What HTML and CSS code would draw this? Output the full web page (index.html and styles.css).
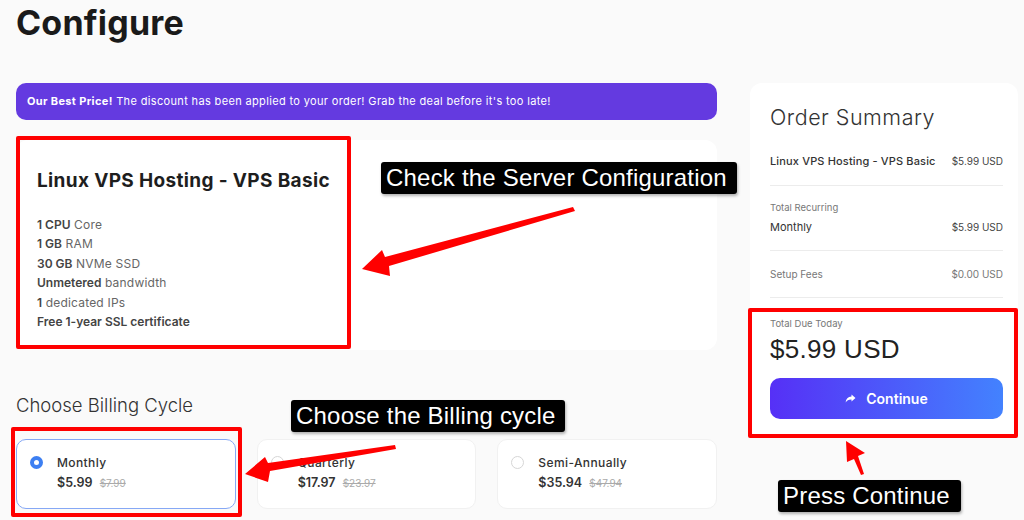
FILE: index.html
```html
<!DOCTYPE html>
<html>
    <head>
        <meta name="viewport" content="width=device-width, initial-scale=1.0">
        <title>Configure</title>
        <link rel="stylesheet" href="styles.css">
    </head>
    <body>
        <div class="header">
            <h1>Configure</h1>
        </div>
        <div class="page">
            <div class="main">
                <div class="banner"><b>Our Best Price!</b> The discount has been applied to your order! Grab the deal before it's too late!</div>

                <div class="product">
                    <h2>Linux VPS Hosting - VPS Basic</h2>
                    <ul class="features">
                        <li><b>1 CPU</b> Core</li>
                        <li><b>1 GB</b> RAM</li>
                        <li><b>30 GB</b> NVMe SSD</li>
                        <li><b>Unmetered</b> bandwidth</li>
                        <li><b>1</b> dedicated IPs</li>
                        <li><b>Free 1-year SSL certificate</b></li>
                    </ul>
                </div>

                <h3 class="cycle-title">Choose Billing Cycle</h3>
                <div class="cycles">
                    <div class="cycle selected">
                        <span class="radio"></span>
                        <div>
                            <div class="cycle-name">Monthly</div>
                            <div class="cycle-price">$5.99 <s>$7.99</s></div>
                        </div>
                    </div>
                    <div class="cycle">
                        <span class="radio"></span>
                        <div>
                            <div class="cycle-name">Quarterly</div>
                            <div class="cycle-price">$17.97 <s>$23.97</s></div>
                        </div>
                    </div>
                    <div class="cycle">
                        <span class="radio"></span>
                        <div>
                            <div class="cycle-name">Semi-Annually</div>
                            <div class="cycle-price">$35.94 <s>$47.94</s></div>
                        </div>
                    </div>
                </div>
            </div>

            <div class="summary">
                <h2>Order Summary</h2>
                <div class="row product-row">
                    <span>Linux VPS Hosting - VPS Basic</span>
                    <span class="amount">$5.99 USD</span>
                </div>
                <div class="block">
                    <div class="small-label">Total Recurring</div>
                    <div class="row">
                        <span>Monthly</span>
                        <span class="amount">$5.99 USD</span>
                    </div>
                </div>
                <div class="block">
                    <div class="row muted">
                        <span>Setup Fees</span>
                        <span class="amount">$0.00 USD</span>
                    </div>
                </div>
                <div class="total">
                    <div class="small-label">Total Due Today</div>
                    <div class="total-amount">$5.99 USD</div>
                    <button class="continue">
                        <svg width="11" height="10" viewBox="0 0 11 10"><path d="M6.5 0.5 L10.5 4 L6.5 7.5 L6.5 5.4 C3.8 5.3 2 6.2 0.6 8.6 C1 5 2.9 2.9 6.5 2.6 Z" fill="#fff"/></svg>
                        Continue
                    </button>
                </div>
            </div>
        </div>

        <!-- annotations drawn over the screenshot -->
        <div class="mark mark-product"></div>
        <div class="mark mark-cycle"></div>
        <div class="mark mark-total"></div>
        <div class="note note-product">Check the Server Configuration</div>
        <div class="note note-cycle">Choose the Billing cycle</div>
        <div class="note note-continue">Press Continue</div>
        <svg class="arrows" width="1024" height="520" viewBox="0 0 1024 520">
            <polygon points="362,269 382,250 385,257 573,207 575,211 389,266 390,276" fill="#ff0000"/>
            <polygon points="245,474 265,457 268,463 395,445 396,449 270,471 268,482" fill="#ff0000"/>
            <polygon points="846,441 865,453 858,456 864,474 861,475 854,459 847,462" fill="#ff0000"/>
        </svg>
    </body>
</html>
```

FILE: styles.css
```css
body {
    margin: 0;
    background: #fafafa;
    font-family: Inter, "Noto Sans", sans-serif;
    color: #222;
    width: 1024px;
    height: 520px;
    overflow: hidden;
    position: relative;
}
.header {
    height: 83px;
    padding-left: 16px;
}
h1 {
    margin: 0;
    font-size: 34px;
    line-height: 46px;
    font-weight: 700;
    color: #1a1a1a;
    letter-spacing: 0.2px;
}
.page {
    display: flex;
    gap: 33px;
    padding-left: 16px;
}
.main {
    width: 701px;
}
.banner {
    height: 37px;
    box-sizing: border-box;
    background: #643ae0;
    border-radius: 10px;
    color: #fff;
    font-size: 11px;
    letter-spacing: 0.35px;
    line-height: 37px;
    padding-left: 11px;
    white-space: nowrap;
}
.product {
    margin-top: 20px;
    height: 210px;
    box-sizing: border-box;
    background: #fff;
    border-radius: 12px;
    padding: 28px 21px 0;
}
.product h2 {
    margin: 0;
    font-size: 19px;
    letter-spacing: 0.35px;
    line-height: 26px;
    font-weight: 700;
    color: #1e1e1e;
}
.features {
    list-style: none;
    margin: 21px 0 0;
    padding: 0;
    font-size: 12px;
    letter-spacing: 0.2px;
    line-height: 19.4px;
    color: #666;
}
.features b {
    color: #444;
    font-weight: 600;
    letter-spacing: 0;
}
.cycle-title {
    margin: 40px 0 0;
    font-size: 18.5px;
    line-height: 30px;
    font-weight: 300;
    color: #333;
}
.cycles {
    margin-top: 19px;
    display: grid;
    grid-template-columns: 1fr 1fr 1fr;
    gap: 21px;
}
.cycle {
    height: 70px;
    box-sizing: border-box;
    background: #fff;
    border: 1px solid #f1f1f1;
    border-radius: 10px;
    display: flex;
    align-items: flex-start;
    padding: 14px 0 0 13px;
}
.cycle.selected {
    border-color: #86a8f5;
}
.radio {
    width: 13px;
    height: 13px;
    box-sizing: border-box;
    border: 1.5px solid #d6d6d6;
    border-radius: 50%;
    margin: 2px 14px 0 0;
}
.selected .radio {
    border: 4px solid #3d7ff2;
}
.cycle-name {
    font-size: 12px;
    letter-spacing: 0.4px;
    line-height: 17px;
    font-weight: 500;
    color: #333;
}
.cycle-price {
    font-size: 12.5px;
    line-height: 19px;
    font-weight: 600;
    color: #333;
    margin-top: 2px;
}
.cycle-price s {
    font-size: 10px;
    font-weight: 400;
    color: #aaa;
    margin-left: 4px;
}
.summary {
    width: 268px;
    height: 354px;
    box-sizing: border-box;
    background: #fff;
    border-radius: 12px;
    padding: 20px 15px 0 20px;
}
.summary h2 {
    margin: 0;
    font-size: 21.5px;
    letter-spacing: 0.5px;
    line-height: 28px;
    font-weight: 300;
    color: #333;
}
.row {
    display: flex;
    justify-content: space-between;
    align-items: center;
    font-size: 11px;
    line-height: 16px;
    color: #333;
}
.amount {
    font-size: 10px;
    color: #444;
}
.product-row {
    margin-top: 22px;
    padding-bottom: 16px;
    border-bottom: 1px solid #ececec;
    font-weight: 500;
}
.product-row span:first-child {
    letter-spacing: 0.15px;
}
.product-row .amount {
    font-weight: 400;
}
.block {
    padding: 15px 0;
    border-bottom: 1px solid #ececec;
}
.small-label {
    font-size: 9.5px;
    line-height: 14px;
    color: #777;
    margin-bottom: 4px;
}
.muted span {
    color: #777;
    font-size: 10px;
}
.total {
    padding-top: 19px;
}
.total .small-label {
    margin-bottom: 3px;
}
.total-amount {
    font-family: "Liberation Sans", Arial, sans-serif;
    font-size: 26px;
    letter-spacing: 0.3px;
    line-height: 30px;
    color: #222;
}
.continue {
    margin-top: 14px;
    width: 233px;
    height: 41px;
    border: none;
    border-radius: 10px;
    background: linear-gradient(90deg, #5630f6, #4382fe);
    color: #fff;
    font-family: inherit;
    font-size: 14px;
    font-weight: 600;
    display: flex;
    align-items: center;
    justify-content: center;
    gap: 10px;
}
.mark {
    position: absolute;
    border: 4px solid #ff0000;
    border-radius: 2px;
    box-sizing: border-box;
}
.mark-product {
    left: 16px;
    top: 136px;
    width: 335px;
    height: 213px;
}
.mark-cycle {
    left: 11px;
    top: 427px;
    width: 231px;
    height: 90px;
}
.mark-total {
    left: 748px;
    top: 308px;
    width: 270px;
    height: 130px;
}
.note {
    position: absolute;
    background: #000;
    color: #fff;
    font-family: "Liberation Sans", Arial, sans-serif;
    font-size: 24px;
    letter-spacing: 0.2px;
    line-height: 32px;
    padding: 0 5px;
    border-radius: 3px;
    box-shadow: 1px 2px 3px rgba(0, 0, 0, 0.3);
    white-space: nowrap;
}
.note-product {
    left: 381px;
    top: 162px;
    width: 346px;
}
.note-cycle {
    left: 291px;
    top: 400px;
    width: 264px;
}
.note-continue {
    left: 778px;
    top: 480px;
    width: 173px;
}
.arrows {
    position: absolute;
    left: 0;
    top: 0;
    pointer-events: none;
}
```
